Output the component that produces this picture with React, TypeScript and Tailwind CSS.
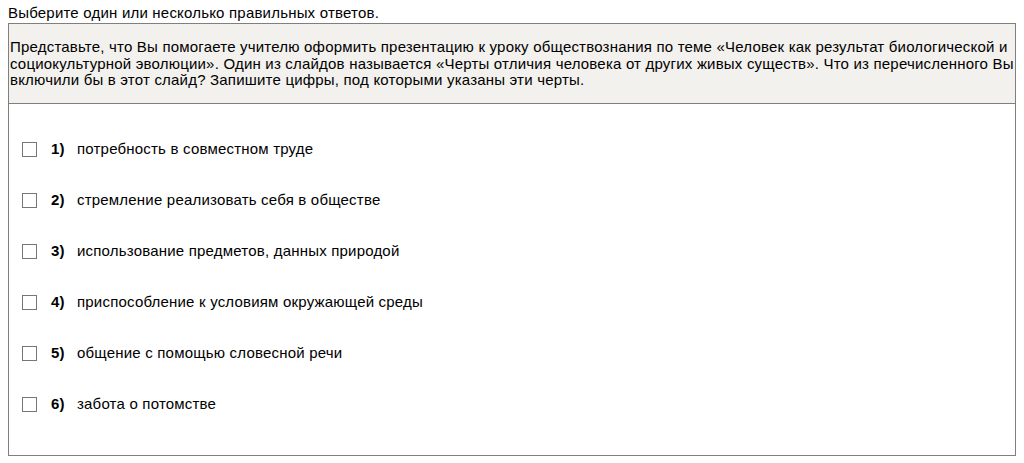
const options = [
  "потребность в совместном труде",
  "стремление реализовать себя в обществе",
  "использование предметов, данных природой",
  "приспособление к условиям окружающей среды",
  "общение с помощью словесной речи",
  "забота о потомстве",
];

export default function App() {
  return (
    <div className="min-h-screen bg-white px-2 pt-[5px] text-[15px] leading-4 tracking-[0.2px] text-black font-['Liberation_Sans',Arial,sans-serif]">
      <div className="mb-[2px]">Выберите один или несколько правильных ответов.</div>
      <div className="w-[1008px] border border-[#7f7f7f]">
        <div className="border-b border-[#7f7f7f] bg-[#f3f1ed] pl-[1px] pt-[15px] pb-[14px] leading-[16.5px]">
          Представьте, что Вы помогаете учителю оформить презентацию к уроку обществознания по теме «Человек как
          результат биологической и социокультурной эволюции». Один из слайдов называется «Черты отличия человека от
          других живых существ». Что из перечисленного Вы включили бы в этот слайд? Запишите цифры, под которыми
          указаны эти черты.
        </div>
        <div className="flex flex-col pt-[20px] pb-[25px]">
          {options.map((text, i) => (
            <label key={i} className="flex h-[51px] items-center pl-[13px]">
              <span className="h-[15px] w-[15px] shrink-0 border border-[#767676] bg-white" />
              <span className="ml-[14px] w-[26px] font-bold">{i + 1})</span>
              <span>{text}</span>
            </label>
          ))}
        </div>
      </div>
    </div>
  );
}
